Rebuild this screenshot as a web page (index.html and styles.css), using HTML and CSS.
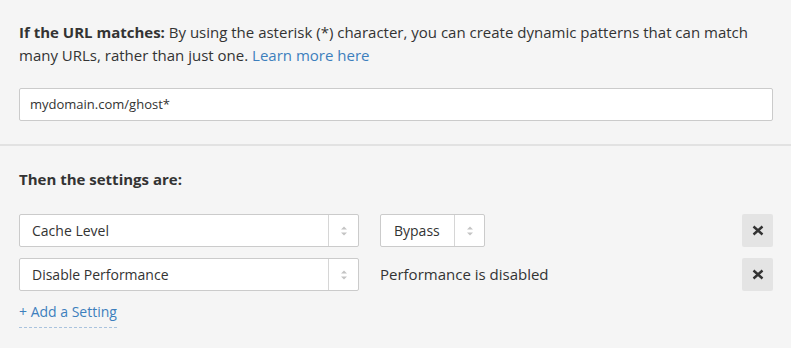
FILE: index.html
```html
<!DOCTYPE html>
<html>
    <head>
        <link rel="stylesheet" href="styles.css">
    </head>
    <body>
        <div class="section url-section">
            <p class="intro">
                <b>If the URL matches:</b> By using the asterisk (*) character, you can create dynamic patterns that can match<br>
                many URLs, rather than just one. <a class="link" href="#">Learn more here</a>
            </p>
            <div class="text-input">mydomain.com/ghost*</div>
        </div>

        <div class="section settings-section">
            <p class="heading">Then the settings are:</p>

            <div class="settings">
                <div class="select wide">
                    <span class="value">Cache Level</span>
                    <span class="arrows"><svg width="8" height="12" viewBox="0 0 8 12"><path d="M1 4.5 L4 1.5 L7 4.5 Z M1 7.5 L4 10.5 L7 7.5 Z" fill="#c4c4c4"/></svg></span>
                </div>
                <div class="option">
                    <div class="select small">
                        <span class="value">Bypass</span>
                        <span class="arrows"><svg width="8" height="12" viewBox="0 0 8 12"><path d="M1 4.5 L4 1.5 L7 4.5 Z M1 7.5 L4 10.5 L7 7.5 Z" fill="#c4c4c4"/></svg></span>
                    </div>
                </div>
                <button class="remove"><svg width="12" height="11" viewBox="0 0 12 11"><path d="M1.5 1.5 L10.5 9.5 M10.5 1.5 L1.5 9.5" stroke="#333" stroke-width="2.4"/></svg></button>

                <div class="select wide">
                    <span class="value">Disable Performance</span>
                    <span class="arrows"><svg width="8" height="12" viewBox="0 0 8 12"><path d="M1 4.5 L4 1.5 L7 4.5 Z M1 7.5 L4 10.5 L7 7.5 Z" fill="#c4c4c4"/></svg></span>
                </div>
                <div class="option">
                    <span class="note">Performance is disabled</span>
                </div>
                <button class="remove"><svg width="12" height="11" viewBox="0 0 12 11"><path d="M1.5 1.5 L10.5 9.5 M10.5 1.5 L1.5 9.5" stroke="#333" stroke-width="2.4"/></svg></button>
            </div>

            <a class="add-setting" href="#">+ Add a Setting</a>
        </div>
    </body>
</html>
```

FILE: styles.css
```css
body
{
    margin: 0;
    background: #f5f5f5;
    color: #333;
    font-family: "Open Sans", "Liberation Sans", sans-serif;
    font-size: 15px;
    line-height: 23px;
}

.section { padding: 21px 18px 0 19px; }
.url-section { padding-bottom: 23px; border-bottom: 2px solid #e2e2e2; }
.settings-section { padding-top: 22px; }

.intro { margin: 0 0 21px 0; }
.intro b, .heading { font-weight: 700; }
.heading { margin: 0 0 23px 0; }

.link { color: #3d7fbd; text-decoration: none; }

.text-input
{
    height: 31px; line-height: 31px;
    padding: 0 10px;
    font-size: 13px;
    background: white;
    border: 1px solid #cbcbcb; border-radius: 2px;
}

.settings
{
    display: grid;
    grid-template-columns: 340px 1fr 31px;
    column-gap: 21px;
    row-gap: 11px;
}

.option { display: flex; align-items: center; }

.select
{
    display: flex;
    height: 31px;
    font-size: 14px;
    background: white;
    border: 1px solid #cbcbcb; border-radius: 2px;
}
.select.small { width: 103px; }
.select .value { flex: 1; line-height: 31px; padding-left: 12px; }
.select.small .value { padding-left: 13px; }
.select .arrows
{
    width: 29px;
    border-left: 1px solid #d6d6d6;
    display: flex; align-items: center; justify-content: center;
}

.remove
{
    width: 31px; height: 33px;
    padding: 0;
    background: #e4e4e4;
    border: none; border-radius: 2px;
    display: flex; align-items: center; justify-content: center;
}

.add-setting
{
    display: inline-block;
    margin-top: 11px;
    padding-bottom: 5px;
    color: #3d7fbd; text-decoration: none;
    font-size: 14px;
    line-height: 20px;
    border-bottom: 1px dashed #a9c3de;
}
```
